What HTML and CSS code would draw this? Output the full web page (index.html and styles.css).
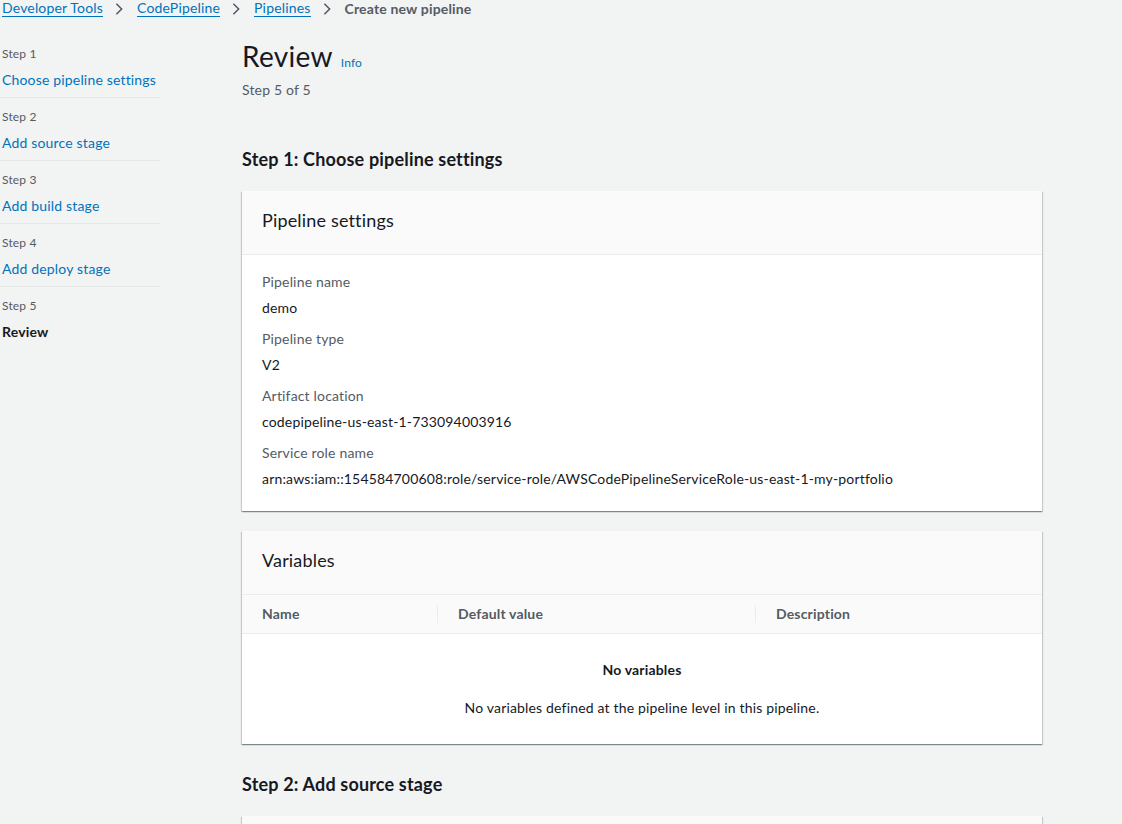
FILE: index.html
```html
<!DOCTYPE html>
<html>
<head>
<meta charset="utf-8">
<link rel="stylesheet" href="styles.css">
</head>
<body>
<nav class="crumbs">
  <a href="#">Developer Tools</a>
  <svg class="chev" viewBox="0 0 16 16"><path d="M5 2l6 6-6 6"/></svg>
  <a href="#">CodePipeline</a>
  <svg class="chev" viewBox="0 0 16 16"><path d="M5 2l6 6-6 6"/></svg>
  <a href="#">Pipelines</a>
  <svg class="chev" viewBox="0 0 16 16"><path d="M5 2l6 6-6 6"/></svg>
  <span class="current">Create new pipeline</span>
</nav>
<div class="layout">
  <aside class="steps">
    <div class="step"><div class="step-no">Step 1</div><a class="step-link" href="#">Choose pipeline settings</a></div>
    <div class="step"><div class="step-no">Step 2</div><a class="step-link" href="#">Add source stage</a></div>
    <div class="step"><div class="step-no">Step 3</div><a class="step-link" href="#">Add build stage</a></div>
    <div class="step"><div class="step-no">Step 4</div><a class="step-link" href="#">Add deploy stage</a></div>
    <div class="step last"><div class="step-no">Step 5</div><div class="step-cur">Review</div></div>
  </aside>
  <main class="main">
    <div class="title-row"><h1>Review</h1><a class="info" href="#">Info</a></div>
    <div class="subtitle">Step 5 of 5</div>

    <h2 class="section first">Step 1: Choose pipeline settings</h2>
    <section class="card">
      <header class="card-head">Pipeline settings</header>
      <div class="card-body">
        <div class="kv"><div class="k">Pipeline name</div><div class="v">demo</div></div>
        <div class="kv"><div class="k">Pipeline type</div><div class="v">V2</div></div>
        <div class="kv"><div class="k">Artifact location</div><div class="v">codepipeline-us-east-1-733094003916</div></div>
        <div class="kv"><div class="k">Service role name</div><div class="v">arn:aws:iam::154584700608:role/service-role/AWSCodePipelineServiceRole-us-east-1-my-portfolio</div></div>
      </div>
    </section>

    <section class="card">
      <header class="card-head">Variables</header>
      <div class="thead">
        <div class="th c1">Name</div>
        <div class="th c2">Default value</div>
        <div class="th c3">Description</div>
      </div>
      <div class="empty">
        <div class="empty-title">No variables</div>
        <div class="empty-text">No variables defined at the pipeline level in this pipeline.</div>
      </div>
    </section>

    <h2 class="section">Step 2: Add source stage</h2>
    <section class="card"><header class="card-head"></header></section>
  </main>
</div>
</body>
</html>
```
FILE: styles.css
```css
* { box-sizing: border-box; }
html, body { margin: 0; padding: 0; }
body {
  background: #f2f3f3;
  font-family: Lato, "Liberation Sans", sans-serif;
  font-size: 14px;
  letter-spacing: 0.17px;
  color: #16191f;
  overflow: hidden;
  height: 824px;
}
a { color: #0073bb; text-decoration: none; }

.crumbs {
  display: flex;
  align-items: center;
  height: 17px;
  padding: 0 0 0 2px;
  font-size: 14px;
}
.crumbs a {
  border-bottom: 1px solid #0073bb;
  line-height: 16px;
}
.crumbs .chev {
  width: 14px; height: 14px;
  margin: 0 11px 0 9px;
  fill: none; stroke: #545b64; stroke-width: 1.8;
}
.crumbs .current { color: #545b64; font-weight: 700; line-height: 16px; }

.layout { display: flex; }
.steps { width: 161px; padding-top: 18px; flex-shrink: 0; }
.step {
  height: 63px;
  border-bottom: 1px solid #e6e8e8;
  padding-top: 12px;
  padding-left: 2px;
}
.step.last { border-bottom: none; }
.step-no { font-size: 12px; color: #545b64; line-height: 14px; }
.step-link, .step-cur { display: block; margin-top: 10px; line-height: 18px; }
.step-cur { font-weight: 700; }

.main { margin-left: 81px; width: 800px; padding-top: 21px; }
.title-row { display: flex; align-items: baseline; }
h1 { font-size: 28px; font-weight: 400; margin: 0; line-height: 36px; letter-spacing: 0.3px; }
.info { font-size: 12px; margin-left: 8px; }
.subtitle { color: #545b64; margin-top: 7px; line-height: 18px; }

.section { font-size: 18px; font-weight: 700; margin: 29px 0 0; line-height: 22px; }
.section.first { margin-top: 49px; }
.card {
  background: #fff;
  margin-top: 21px;
  box-shadow: 0 1px 1px 0 rgba(0,28,36,.3), 1px 1px 1px 0 rgba(0,28,36,.15), -1px 1px 1px 0 rgba(0,28,36,.15);
}
.card + .card { margin-top: 20px; }
.card-head {
  background: #fafafa;
  border-bottom: 1px solid #eaeded;
  height: 64px;
  padding: 18px 20px 0;
  font-size: 18px;
  line-height: 22px;
}
.card-body { padding: 18px 20px 10px; }
.kv { height: 57px; }
.k { color: #545b64; line-height: 18px; }
.v { margin-top: 8px; line-height: 18px; }

.thead {
  display: flex;
  background: #fafafa;
  border-bottom: 1px solid #eaeded;
  height: 39px;
  align-items: center;
}
.th { font-weight: 700; color: #545b64; padding-left: 20px; border-left: 1px solid #eaeded; line-height: 18px; }
.th.c1 { border-left: none; width: 195px; }
.th.c2 { width: 318px; }
.th.c3 { flex: 1; }
.empty { text-align: center; padding: 27px 0 27px; }
.empty-title { font-weight: 700; line-height: 18px; }
.empty-text { margin-top: 20px; line-height: 18px; }
```
